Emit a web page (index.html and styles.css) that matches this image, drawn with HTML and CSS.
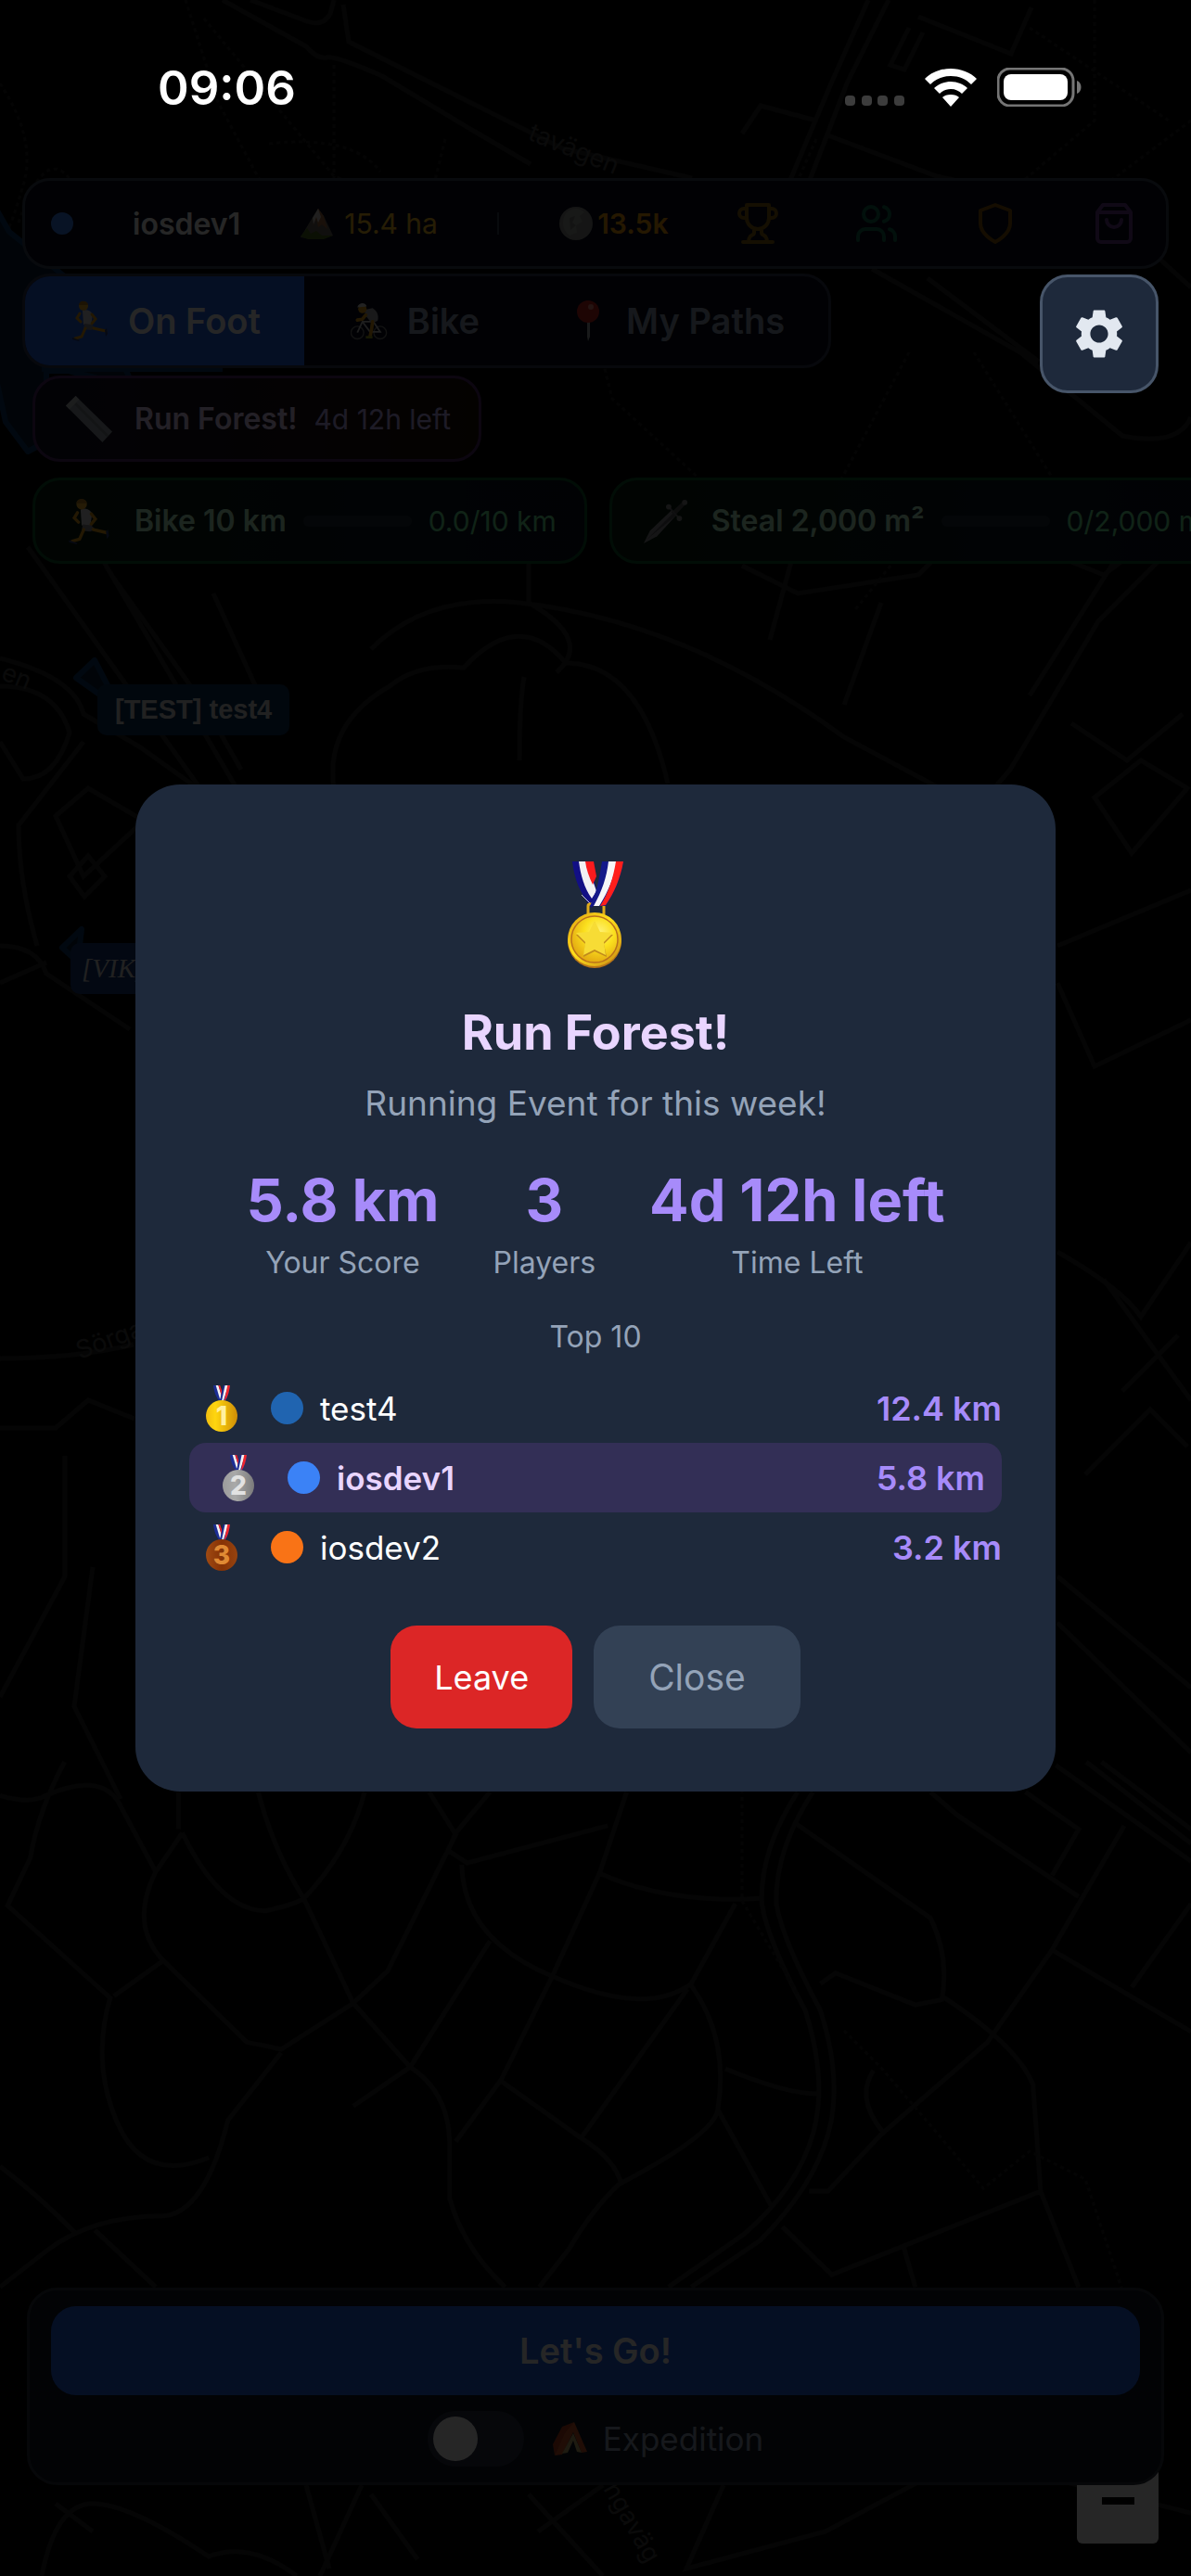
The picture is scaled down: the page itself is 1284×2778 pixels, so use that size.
FILE: index.html
```html
<!DOCTYPE html>
<html lang="en">
<head>
    <meta charset="UTF-8">
    <meta name="viewport" content="width=device-width, initial-scale=1.0">
    <title>Run Forest!</title>
    <link rel="stylesheet" href="styles.css">
</head>
<body>
    <!-- shared icons -->
    <svg class="sprite" aria-hidden="true">
        <defs>
            <linearGradient id="gold" x1="0" y1="0" x2="1" y2="1">
                <stop offset="0" stop-color="#e0a010"/>
                <stop offset="0.45" stop-color="#ffe01c"/>
                <stop offset="1" stop-color="#c98a12"/>
            </linearGradient>
            <radialGradient id="goldFace" cx="0.6" cy="0.35" r="0.8">
                <stop offset="0" stop-color="#fff27a"/>
                <stop offset="0.4" stop-color="#fbe01e"/>
                <stop offset="1" stop-color="#d9930c"/>
            </radialGradient>
            <linearGradient id="coin1" x1="0" y1="0" x2="1" y2="0">
                <stop offset="0" stop-color="#f0bc10"/>
                <stop offset="0.3" stop-color="#ffd60f"/>
                <stop offset="1" stop-color="#cf8d06"/>
            </linearGradient>
            <linearGradient id="coin2" x1="0" y1="0" x2="1" y2="0">
                <stop offset="0" stop-color="#9c9c9c"/>
                <stop offset="0.4" stop-color="#a9a9a9"/>
                <stop offset="1" stop-color="#7b7b7b"/>
            </linearGradient>
            <linearGradient id="coin3" x1="0" y1="0" x2="1" y2="0">
                <stop offset="0" stop-color="#a04a12"/>
                <stop offset="0.5" stop-color="#863205"/>
                <stop offset="1" stop-color="#96430f"/>
            </linearGradient>
        </defs>
        <symbol id="runner" viewBox="0 0 40 44">
            <path d="M9 14l-3 5 4 4" fill="none" stroke="#e8a21a" stroke-width="3" stroke-linecap="round"/>
            <path d="M12 11c4-2 9 0 11 4l-2 12-8-1z" fill="#d8d8dc"/>
            <path d="M22 15l4 5-4 5" fill="none" stroke="#e8a21a" stroke-width="3" stroke-linecap="round"/>
            <path d="M14 25l8 1 4 4-5 2-8-1z" fill="#8d8a96"/>
            <path d="M24 30l13 3M15 30l-4 9-7 2" fill="none" stroke="#e8a21a" stroke-width="3" stroke-linecap="round"/>
            <path d="M36 32l2-2 1 6-2 3zM1 40l8 3-1 1-7-2z" fill="#2b3c78"/>
            <circle cx="13" cy="6" r="5" fill="#f3b32c"/>
            <path d="M8 5c0-5 9-6 10 0z" fill="#b9801c"/>
        </symbol>
        <symbol id="cyclist" viewBox="0 0 44 44">
            <g fill="none" stroke="#777" stroke-width="1.5">
                <circle cx="8" cy="36" r="7.5"/>
                <circle cx="35" cy="36" r="7.5"/>
            </g>
            <path d="M8 36l6-13 9 12h12l-8-12H14" fill="none" stroke="#c9c9c9" stroke-width="2"/>
            <path d="M16 9l10-2c5 3 8 9 6 15l-7 3-7-9z" fill="#a9a9b0"/>
            <path d="M18 15l-4 5-6 1M26 23l-1 8-2 10" fill="none" stroke="#e8a21a" stroke-width="4" stroke-linecap="round"/>
            <circle cx="14" cy="8" r="5" fill="#e8a21a"/>
            <path d="M8 6c1-6 10-7 11-1z" fill="#e4e4e4"/>
            <path d="M18 40h8v3h-8z" fill="#9fa61e"/>
        </symbol>
        <symbol id="pin" viewBox="0 0 40 44">
            <path d="M19 20h3v19l-2 5-1-5z" fill="#a9adb3"/>
            <circle cx="20" cy="12" r="12" fill="#c9211e"/>
            <circle cx="23" cy="7" r="3" fill="#f08a80"/>
        </symbol>
        <symbol id="mountain" viewBox="0 0 37 34">
            <path d="M1 32L13 12l7-11 6 8 10 21-10 3H9z" fill="#6f665c"/>
            <path d="M20 1l6 8 4 14-6-5-4 3-2-9-4 8z" fill="#a86c45"/>
            <path d="M20 1l3 9-3 6-2-6-3 8-1-7z" fill="#d8d2cc"/>
            <path d="M1 31l7-9 4 6 6-3 6 5 12 0-10 4H9z" fill="#4c6b1e"/>
        </symbol>
        <symbol id="rock" viewBox="0 0 38 38">
            <circle cx="19" cy="19" r="18" fill="#8b8f8a"/>
            <path d="M8 8c6-6 15-6 20-1l-5 4 3 6-7 4 1 8-8 3C4 26 3 16 8 8z" fill="#a2a59f"/>
            <path d="M12 13l6-2-3 7 4 3-6 5z" fill="#7f837e"/>
        </symbol>
        <symbol id="ruler" viewBox="0 0 52 52">
            <path d="M0 11L11 0l41 40-11 12z" fill="#9aa3ab"/>
            <path d="M7 5l40 40" stroke="#7d868e" stroke-width="3"/>
            <path d="M0 11L11 0l4 4L4 15z" fill="#b8bfc4"/>
        </symbol>
        <symbol id="dagger" viewBox="0 0 52 52">
            <path d="M1 51L8 37 32 14l5 6-21 23z" fill="#909094"/>
            <path d="M4 47l30-30 3 3z" fill="#5b5b60"/>
            <path d="M32 16L45 4l3 3-12 13z" fill="#56565a"/>
            <path d="M29 10l12 13" stroke="#6f6f73" stroke-width="2"/>
            <circle cx="47" cy="5" r="3" fill="#8a8a8e"/>
            <circle cx="29" cy="10" r="3" fill="#8a8a8e"/>
            <circle cx="41" cy="23" r="3" fill="#8a8a8e"/>
        </symbol>
        <symbol id="tent" viewBox="0 0 39 36">
            <path d="M1 24L11 5 24 0l-12 18-9 18z" fill="#b8401c"/>
            <path d="M24 0l14 32-6 1-9-22L11 35l-8 1 11-24z" fill="#d8582a"/>
            <path d="M23 12l9 21-5-1-4-12-6 13-6 1z" fill="#c9b476"/>
        </symbol>
        <symbol id="ribbon" viewBox="0 0 20 20">
            <path d="M0 0h7l4 17-3 3C3 14 1 8 0 0z" fill="#1b2d94"/>
            <path d="M3 0h3l4 13-2 4z" fill="#f2f2f2"/>
            <path d="M6 0h2l3 9-1 4z" fill="#e8222c"/>
            <path d="M12 0h8c-1 8-3 15-6 19l-5 1-1-3z" fill="#1b2d94"/>
            <path d="M14 0h4l-6 19-2 0z" fill="#f2f2f2"/>
            <path d="M17 0h3c-1 8-3 14-6 18l-1 1z" fill="#f0262c"/>
        </symbol>
    </svg>

    <div class="app">
        <!-- map layer -->
        <div class="map">
            <svg class="map-tiles" viewBox="0 0 1284 2778" preserveAspectRatio="xMidYMin slice" aria-hidden="true">
                <g class="roads">
                    <path d="M240 0l90 50q12 14 22 12t60 20l100 60 60 35M360 0l-4 15q-8 14-25 8L270 0M370 5l6 40 130 65 100 50 140 32"/>
                    <path d="M936 0l-40 90-55 130M958 0l-45 90-50 130M990 18l100 40 22-50M890 145l120 45 90 20M880 130l-60-16-20 30M980 30l-20 40 15 5 20-40"/>
                    <path d="M940 290l160 90 110 90q60 12 74-20M1240 270l44 40M1000 300l120 90M30 590l200 280M85 560l170 290M120 620l100 140 40 70M230 640l50 110"/>
                    <path d="M570 600v50q70 40 30 75M360 850q-10-70 60-110 30-25 80-20 60-65 110-5 80 0 110 130M400 700q60-60 160-50 180 20 350 145l150 80M560 820q0-60 5-90"/>
                    <path d="M0 710q80 20 90 60l60 35 70 50M0 740q60 0 75 50-15 50-50 50L0 800M90 800L20 890q0 60 20 130M60 880l35-30 60 35-65 60zM75 945l20-22 18 22-22 22zM0 1020q40 0 50 30l90 60M0 1060l50-22"/>
                    <path d="M1284 570l-100 100-95 160-60 70M1230 560l-120 190M1140 1020l144-60M1140 1060l40 90 104-50M1140 1350q70 40 90 70l54-80M1190 1380l94 130M1140 1700l144 120M1140 1750l144 140"/>
                    <path d="M0 1465q80 0 144-15M0 1540h60l35-30 50 20M70 1570v130l-70 130M100 1690l-20 150 50 100M1050 560l-60 60-130 20-60-30M860 580l-30 110M950 650l-40 110"/>
                    <path d="M1140 600l50 20 40-30M1155 780l60 40 60-50M1180 860l50-40 50 30-60 70zM1210 1500l60-60M1170 1590l70-70 40 40"/>
                </g>
                <!-- lower streets -->
                <g class="roads" transform="translate(0 1900) scale(0.8189 0.3827)">
                    <path d="M85 0Q50 140 40 270L10 405 145 665Q120 850 155 1020T275 1115M0 95Q40 120 60 95 130 30 155 110L205 310Q170 460 215 560L150 660M235 85V190M240 200L205 310M240 200Q290 420 350 420 390 400 400 385 460 250 480 85M340 85Q360 250 400 385L465 680 370 810Q350 800 325 790L215 560M370 820L300 1010Q270 1270 215 1280 120 1280 60 1380L0 1480M0 1140Q50 1220 100 1330M125 1320L205 1480M565 85L600 205 510 590 465 680 540 860Q590 930 592 1070V1230Q610 1370 665 1480M645 85L600 200 590 250 615 285 800 180M608 290Q610 500 728 605 850 720 910 625L968 400M825 85L790 310 728 600 660 895 600 1070M645 505L540 860 465 970M790 315Q880 400 1000 385M910 630Q960 780 945 980 940 1050 815 1190 780 1260 750 1370L710 1480M905 640L765 1060Q810 1120 818 1190M660 900L765 1060M945 980L1015 1250M955 865Q1040 940 1080 935M1045 170L1225 440Q1250 550 1240 670L1205 685 1100 595 1080 625M1240 660Q1340 800 1360 910L1370 1210 1420 1480M1370 1210L1095 1445 1030 1310M1190 1370L1205 1480M1350 85L1420 190 1385 320M1225 85L1260 150 1420 380M1480 180L1385 530 1300 790 1160 1050 1090 1210 1065 1210M1385 530L1568 760M1568 400L1490 635M1150 870Q1125 950 1165 1050"/>
                    <path d="M1050 85Q1000 250 1003 400 1010 500 1060 700 1090 900 1070 1050 1050 1200 980 1330L880 1480M1070 85Q1020 250 1022 400 1030 500 1080 700 1110 900 1090 1050 1070 1200 1000 1350L910 1480M1390 10L1568 280M1430 0L1568 230M1450 0L1568 190"/>
                </g>
                <g class="roads">
                    <path d="M45 2778Q60 2700 100 2700T225 2757Q270 2740 320 2778M390 2680l-45 98M400 2690l50 70M330 2680l25 90M780 2680l-40 90 150-40 150-80 244 60M650 2680l-70 50M570 2690l80 88M60 2700l40 30"/>
                </g>
                <g class="paths">
                    <path d="M200 0l35 110 80 150M220 20l140 170 160 60M360 70v170M0 90q40 60 25 110t-22 60M20 240q30-90 60-40M480 150l-20 80M290 155q90-10 120 30M880 150l-40 90M1110 30l150 100M1180 0v130l-130 110M1284 130l-120 90M650 390l10 40 120 110M980 380l-80 150M1050 380l100 160M800 560l80-20 60 40M1000 560l-80 100"/>
                    <path d="M910 2190l40 40 60 70 50 60 50-40 60 30 60 180M800 1930v120l60 100"/>
                </g>
                <!-- claimed areas -->
                <path class="zone" d="M-6 222l16 28 62 50 60 90 12 28-70-18H50v76l-20 11L6 455-6 400z"/>
                <path class="zone-line" d="M45 398h195"/>
                <path class="zone" d="M82 731l20-19 16 31-12 5z"/>
                <path class="zone" d="M67 1022l21-20-4 34-6-4z"/>
                <g class="street-names">
                    <text transform="translate(568 150) rotate(22)">tavägen</text>
                    <text transform="translate(0 732) rotate(22)">en</text>
                    <text transform="translate(86 1466) rotate(-20)">Sörga</text>
                    <text transform="translate(650 2684) rotate(60)">ngaväg</text>
                </g>
            </svg>
            <span class="tag tag-test">[TEST] test4</span>
            <span class="tag tag-vik">[VIK] iosdev1</span>
            <button class="zoom-out" type="button" aria-label="Zoom out"></button>
        </div>

        <header class="hud">
            <div class="topbar">
                <span class="dot dot-me"></span>
                <span class="username">iosdev1</span>
                <span class="land"><svg class="icon-land"><use href="#mountain"/></svg>15.4 ha</span>
                <span class="divider"></span>
                <span class="gold"><svg class="icon-rock"><use href="#rock"/></svg>13.5k</span>
                <button class="icon-btn trophy" type="button" aria-label="Leaderboard">
                    <svg viewBox="0 0 24 24"><path d="M6 9H4.500a2.500 2.500 0 0 1 0-5H6M18 9h1.500a2.500 2.500 0 0 0 0-5H18M4 22h16M10 14.660V17c0 .55-.47.98-.97 1.210C7.850 18.750 7 20.240 7 22M14 14.660V17c0 .55.47.98.97 1.210C16.150 18.750 17 20.240 17 22M18 2H6v7a6 6 0 0 0 12 0V2Z"/></svg>
                </button>
                <button class="icon-btn users" type="button" aria-label="Friends">
                    <svg viewBox="0 0 24 24"><path d="M16 21v-2a4 4 0 0 0-4-4H6a4 4 0 0 0-4 4v2"/><circle cx="9" cy="7" r="4"/><path d="M22 21v-2a4 4 0 0 0-3-3.870M16 3.130a4 4 0 0 1 0 7.750"/></svg>
                </button>
                <button class="icon-btn shield" type="button" aria-label="Defence">
                    <svg viewBox="0 0 24 24"><path d="M12 22s8-4 8-10V5l-8-3-8 3v7c0 6 8 10 8 10z"/></svg>
                </button>
                <button class="icon-btn bag" type="button" aria-label="Shop">
                    <svg viewBox="0 0 24 24"><path d="M6 2L3 6v14a2 2 0 0 0 2 2h14a2 2 0 0 0 2-2V6l-3-4zM3 6h18M16 10a4 4 0 0 1-8 0"/></svg>
                </button>
            </div>

            <nav class="tabs">
                <button class="tab active" type="button"><svg><use href="#runner"/></svg>On Foot</button>
                <button class="tab" type="button"><svg><use href="#cyclist"/></svg>Bike</button>
                <button class="tab" type="button"><svg><use href="#pin"/></svg>My Paths</button>
            </nav>

            <div class="pill event">
                <svg><use href="#ruler"/></svg>
                <strong>Run Forest!</strong>
                <span>4d 12h left</span>
            </div>

            <div class="goals">
                <div class="pill goal">
                    <svg><use href="#runner"/></svg>
                    <strong>Bike 10 km</strong>
                    <span class="bar"></span>
                    <span>0.0/10 km</span>
                </div>
                <div class="pill goal">
                    <svg><use href="#dagger"/></svg>
                    <strong>Steal 2,000 m²</strong>
                    <span class="bar"></span>
                    <span>0/2,000 m²</span>
                </div>
            </div>
        </header>

        <section class="panel">
            <button class="go" type="button">Let's Go!</button>
            <label class="expedition">
                <input type="checkbox" class="switch">
                <span><svg><use href="#tent"/></svg>Expedition</span>
            </label>
        </section>
    </div>

    <div class="backdrop">
        <section class="dialog" role="dialog" aria-labelledby="event-title">
            <svg class="medal" viewBox="0 0 62 116" aria-hidden="true">
                <path d="M6 1h19l9 40-7 10C15 37 8 20 6 1z" fill="#120f84"/>
                <path d="M13 1h8l11 32-5 8C19 30 15 16 13 1z" fill="#f1f1f4"/>
                <path d="M20 1h9l3 16-4 9C24 18 21 9 20 1z" fill="#fb1b1d"/>
                <path d="M16 37l10 10" stroke="#c9c9da" stroke-width="1"/>
                <rect x="23" y="47" width="17" height="12" rx="2" fill="none" stroke="#e0ab1a" stroke-width="3"/>
                <path d="M38 1h23c-3 19-10 34-19 48H25c8-15 10-31 13-48z" fill="#14198a"/>
                <path d="M45 1h9c-3 17-9 32-19 48h-6c9-16 14-31 16-48z" fill="#f6f6f8"/>
                <path d="M53 1h8c-3 18-10 34-19 47l-6 1c9-14 14-30 17-48z" fill="#ff1f1b"/>
                <circle cx="30" cy="87" r="29" fill="#b87418"/>
                <circle cx="30" cy="85" r="29" fill="url(#gold)"/>
                <circle cx="30" cy="85" r="25" fill="url(#goldFace)" stroke="#b9701c" stroke-width="1.500"/>
                <path d="M30 66l6 13 14 1-10 10 3 14-13-6-12 6 2-14-10-10 14-1z" fill="#c08a1c"/>
                <path d="M30 65l6 12 14 1-10 10 2 14-12-6-12 6 2-14-10-10 14-1z" fill="#f7dc35"/>
            </svg>
            <h1 id="event-title">Run Forest!</h1>
            <p class="subtitle">Running Event for this week!</p>

            <dl class="stats">
                <div><dd>5.8 km</dd><dt>Your Score</dt></div>
                <div><dd>3</dd><dt>Players</dt></div>
                <div><dd>4d 12h left</dd><dt>Time Left</dt></div>
            </dl>

            <h2>Top 10</h2>
            <ol class="ranking">
                <li>
                    <svg class="rank" viewBox="0 0 34 50"><use href="#ribbon" x="8" width="18" height="18"/><circle cx="17" cy="33" r="17" fill="url(#coin1)"/><text class="digit digit-1" x="17" y="43">1</text></svg>
                    <span class="dot dot-test"></span>
                    <span class="player">test4</span>
                    <span class="score">12.4 km</span>
                </li>
                <li class="me">
                    <svg class="rank" viewBox="0 0 34 50"><use href="#ribbon" x="8" width="18" height="18"/><circle cx="17" cy="33" r="17" fill="url(#coin2)"/><text class="digit digit-2" x="17" y="43">2</text></svg>
                    <span class="dot dot-dev1"></span>
                    <span class="player">iosdev1</span>
                    <span class="score">5.8 km</span>
                </li>
                <li>
                    <svg class="rank" viewBox="0 0 34 50"><use href="#ribbon" x="8" width="18" height="18"/><circle cx="17" cy="33" r="17" fill="url(#coin3)"/><text class="digit digit-3" x="17" y="43">3</text></svg>
                    <span class="dot dot-dev2"></span>
                    <span class="player">iosdev2</span>
                    <span class="score">3.2 km</span>
                </li>
            </ol>

            <div class="actions">
                <button class="leave" type="button">Leave</button>
                <button class="close" type="button">Close</button>
            </div>
        </section>
    </div>

    <button class="settings" type="button" aria-label="Settings">
        <svg viewBox="0 0 24 24"><path d="M19.140 12.940c.04-.3.06-.61.06-.94 0-.32-.02-.64-.07-.94l2.030-1.580c.18-.14.23-.41.12-.61l-1.920-3.320c-.12-.22-.37-.29-.59-.22l-2.390.96c-.5-.38-1.030-.7-1.620-.94l-.36-2.540c-.04-.24-.24-.41-.48-.41h-3.840c-.24 0-.43.17-.47.41l-.36 2.540c-.59.24-1.130.57-1.620.94l-2.390-.96c-.22-.08-.47 0-.59.22L2.740 8.870c-.12.21-.08.47.12.61l2.030 1.580c-.05.3-.09.63-.09.94s.02.64.07.94l-2.030 1.580c-.18.14-.23.41-.12.61l1.920 3.320c.12.22.37.29.59.22l2.390-.96c.5.38 1.030.7 1.620.94l.36 2.540c.05.24.24.41.48.41h3.840c.24 0 .44-.17.47-.41l.36-2.540c.59-.24 1.130-.56 1.620-.94l2.390.96c.22.08.47 0 .59-.22l1.920-3.320c.12-.22.07-.47-.12-.61l-2.010-1.580zM12 15.600c-1.980 0-3.600-1.620-3.600-3.600s1.620-3.600 3.600-3.600 3.600 1.620 3.600 3.600-1.620 3.600-3.600 3.600z"/></svg>
    </button>

    <div class="statusbar">
        <time>09:06</time>
        <div class="status-icons">
            <svg width="64" height="42" viewBox="0 0 64 42"><g fill="#3c3c3c"><rect y="30" width="11" height="11" rx="4"/><rect x="18" y="30" width="11" height="11" rx="4"/><rect x="35" y="30" width="11" height="11" rx="4"/><rect x="53" y="30" width="11" height="11" rx="4"/></g></svg>
            <svg width="56" height="42" viewBox="0 0 56 42"><g fill="#fff"><path d="M28 1c11 0 21 4 28 11l-6 6c-6-6-13-9-22-9S12 12 6 18l-6-6C7 5 17 1 28 1z"/><path d="M28 15c7 0 14 3 18 7l-6 6c-3-3-7-5-12-5s-9 2-12 5l-6-6c4-4 11-7 18-7z"/><path d="M28 29c4 0 7 1 9 3l-9 10-9-10c2-2 5-3 9-3z"/></g></svg>
            <svg width="91" height="42" viewBox="0 0 91 42"><rect x="1" y="1" width="81" height="40" rx="13" fill="none" stroke="#757575" stroke-width="3"/><rect x="7" y="7" width="69" height="28" rx="8" fill="#fff"/><path d="M86 14c6 2 6 12 0 14z" fill="#757575"/></svg>
        </div>
    </div>
</body>
</html>
```
FILE: styles.css
```css
* {
    box-sizing: border-box;
}

body {
    margin: 0;
    background: #060606;
    color: #fff;
    font-family: Inter, "Noto Sans", sans-serif;
    font-size: 32px;
}

button {
    border: none;
    background: none;
    color: inherit;
    font-family: inherit;
    padding: 0;
    cursor: pointer;
}

.sprite {
    position: absolute;
    width: 0;
    height: 0;
}

.app {
    position: relative;
    display: flex;
    flex-direction: column;
    justify-content: space-between;
    min-height: 100vh;
    padding: 192px 24px 98px;
    overflow: hidden;
}

/* map */
.map {
    position: absolute;
    inset: 0;
}

.map-tiles {
    width: 100%;
    height: 100%;
}

.roads path {
    fill: none;
    stroke: #222;
    stroke-width: 5;
    vector-effect: non-scaling-stroke;
}

.paths path {
    fill: none;
    stroke: #1c1c1c;
    stroke-width: 3;
    stroke-dasharray: 4 4;
}

.zone {
    fill: #07203a;
    stroke: #0c3a6c;
    stroke-width: 6;
    stroke-linejoin: round;
}

.zone-line {
    stroke: #0c3a6c;
    stroke-width: 6;
}

.street-names {
    fill: #444;
    font-size: 27px;
}

.tag {
    position: absolute;
    border-radius: 10px;
    padding: 0 19px;
    color: #ddd;
    font-family: "Liberation Sans", Arial, sans-serif;
    font-size: 29px;
    font-weight: bold;
    line-height: 55px;
}

.tag-test {
    left: 105px;
    top: 738px;
    background: #0b3057;
}

.tag-vik {
    left: 76px;
    top: 1017px;
    padding: 0 12px;
    background: #16397a;
    font-family: "Liberation Serif", serif;
    font-style: italic;
    font-weight: normal;
}

.zoom-out {
    position: absolute;
    right: 35px;
    bottom: 35px;
    width: 88px;
    height: 93px;
    border-radius: 6px;
    background: #fff;
}

.zoom-out::before {
    content: "";
    display: block;
    width: 35px;
    height: 8px;
    margin: 0 auto;
    background: #000;
}

/* header */
.hud {
    position: relative;
    display: flex;
    flex-direction: column;
    align-items: flex-start;
}

.topbar {
    display: flex;
    align-items: center;
    justify-content: space-between;
    width: 100%;
    height: 98px;
    padding: 0 24px 0 28px;
    border: 3px solid #3b4258;
    border-radius: 30px;
    background: #070b1c;
}

.dot {
    flex: none;
    width: 35px;
    height: 35px;
    border-radius: 50%;
}

.dot-me {
    width: 24px;
    height: 24px;
    background: #3b82f6;
}

.username {
    font-weight: 600;
}

.land,
.gold {
    display: flex;
    align-items: center;
    font-size: 30px;
    color: #fbbf24;
}

.gold {
    color: #f59e0b;
    font-weight: 600;
    gap: 4px;
}

.land {
    gap: 11px;
}

.icon-land {
    width: 37px;
    height: 34px;
}

.icon-rock {
    width: 38px;
    height: 38px;
}

.divider {
    width: 2px;
    height: 24px;
    background: #3b4458;
}

.icon-btn {
    padding: 0 8px;
    height: 48px;
}

.icon-btn svg {
    width: 48px;
    height: 48px;
    fill: none;
    stroke: currentColor;
    stroke-width: 2;
    stroke-linecap: round;
    stroke-linejoin: round;
}

.trophy {
    color: #8a6410;
}

.users {
    color: #0e6e50;
}

.shield {
    color: #8a5a0a;
}

.bag {
    color: #6c3f96;
}

.tabs {
    display: flex;
    height: 102px;
    margin-top: 5px;
    border: 3px solid #303850;
    border-radius: 30px;
    background: #070b1c;
    overflow: hidden;
}

.tab {
    display: flex;
    align-items: center;
    gap: 21px;
    padding: 0 47px 0 50px;
    color: #94a3b8;
    font-size: 38px;
    font-weight: 600;
}

.tab svg {
    width: 40px;
    height: 44px;
}

.tab.active {
    background: #2563eb;
    color: #fff;
}

.pill {
    display: flex;
    flex: none;
    align-items: center;
    gap: 18px;
    height: 93px;
    padding: 0 30px 0 32px;
    border: 3px solid #55286f;
    border-radius: 30px;
    white-space: nowrap;
}

.pill svg {
    width: 52px;
    height: 50px;
    margin-right: 5px;
}

.pill strong {
    font-weight: 600;
}

.pill span {
    font-size: 30px;
}

.event {
    margin: 8px 0 0 11px;
    background: linear-gradient(90deg, #111027, #1c0f16 60%, #1d1205);
    color: #e9d5ff;
}

.event span {
    color: #c4b5fd;
}

.goals {
    display: flex;
    gap: 24px;
    margin: 17px 0 0 11px;
}

.goal {
    border-color: #0b5a2c;
    background: linear-gradient(90deg, #07200f, #0b1822 60%, #0a0f20);
    color: #bbf7d0;
}

.goal span {
    color: #6ee79a;
}

.goal .bar {
    width: 117px;
    height: 12px;
    border-radius: 6px;
    background: #1f2c36;
}

/* bottom panel */
.panel {
    position: relative;
    margin: 0 5px;
    padding: 17px 23px 17px;
    border: 3px solid #2a323e;
    border-radius: 33px;
    background: #0f1923;
}

.go {
    display: block;
    width: 100%;
    height: 96px;
    border-radius: 27px;
    background: #2563eb;
    font-size: 38px;
    font-weight: 600;
}

.expedition {
    display: flex;
    align-items: center;
    justify-content: center;
    gap: 30px;
    margin-top: 17px;
    color: #94a3b8;
    font-size: 35px;
}

.expedition span {
    display: flex;
    align-items: center;
    gap: 16px;
}

.expedition svg {
    width: 39px;
    height: 36px;
}

.switch {
    appearance: none;
    width: 104px;
    height: 60px;
    margin: 0;
    padding: 6px;
    border-radius: 30px;
    background: #2a3146;
}

.switch::before {
    content: "";
    display: block;
    width: 48px;
    height: 48px;
    border-radius: 50%;
    background: #fff;
}

.switch:checked {
    background: #2563eb;
}

/* event dialog */
.backdrop {
    position: absolute;
    inset: 0;
    display: flex;
    align-items: center;
    justify-content: center;
    background: rgba(0, 0, 0, 0.85);
}

.dialog {
    width: calc(100% - 292px);
    padding: 82px 58px 68px;
    border-radius: 48px;
    background: #1e293b;
    text-align: center;
}

.medal {
    display: block;
    width: 62px;
    height: 116px;
    margin: 0 auto 40px;
}

h1 {
    margin: 0;
    color: #e9d5ff;
    font-size: 52px;
    font-weight: 700;
    line-height: 60px;
}

.subtitle {
    margin: 22px 0 0;
    color: #94a3b8;
    font-size: 37px;
    line-height: 48px;
}

.stats {
    display: flex;
    justify-content: center;
    gap: 58px;
    margin: 42px 0 36px;
}

.stats dd {
    margin: 0;
    color: #a78bfa;
    font-size: 63px;
    font-weight: 700;
    line-height: 76px;
}

.stats dt {
    margin-top: 8px;
    color: #94a3b8;
    line-height: 44px;
}

h2 {
    margin: 0 0 17px;
    color: #94a3b8;
    font-size: 32px;
    font-weight: 400;
    line-height: 44px;
}

.ranking {
    margin: 0;
    padding: 0;
    list-style: none;
    text-align: left;
}

.ranking li {
    display: flex;
    align-items: center;
    gap: 18px;
    height: 75px;
    padding-left: 18px;
    font-size: 35px;
}

.ranking .me {
    padding: 0 18px 0 36px;
    border-radius: 18px;
    background: #332f56;
}

.me .player {
    color: #e9d5ff;
    font-weight: 600;
}

.rank {
    width: 34px;
    height: 50px;
    margin-right: 18px;
}

.digit {
    font-size: 28px;
    font-weight: 800;
    text-anchor: middle;
}

.digit-1 {
    fill: #fff0a0;
}

.digit-2 {
    fill: #e2e2e2;
}

.digit-3 {
    fill: #e08a34;
}

.dot-test {
    background: #2064b0;
}

.dot-dev1 {
    background: #3b82f6;
}

.dot-dev2 {
    background: #f97316;
}

.score {
    margin-left: auto;
    color: #a78bfa;
    font-size: 36px;
    font-weight: 600;
}

.actions {
    display: flex;
    justify-content: center;
    gap: 23px;
    margin-top: 47px;
}

.actions button {
    height: 111px;
    border-radius: 28px;
}

.leave {
    padding: 0 47px;
    background: #dc2626;
    font-size: 36px;
}

.close {
    padding: 0 59px;
    background: #334155;
    color: #94a3b8;
    font-size: 39px;
}

.settings {
    position: absolute;
    top: 296px;
    right: 35px;
    display: flex;
    align-items: center;
    justify-content: center;
    width: 128px;
    height: 128px;
    border: 3px solid #475569;
    border-radius: 30px;
    background: #1e293b;
}

.settings svg {
    width: 64px;
    height: 64px;
    fill: #e2e8f0;
}

/* phone status bar */
.statusbar {
    position: absolute;
    top: 0;
    left: 0;
    display: flex;
    align-items: center;
    justify-content: space-between;
    width: 100%;
    padding: 64px 118px 0 170px;
}

.statusbar time {
    font-size: 51px;
    font-weight: 600;
    line-height: 62px;
}

.status-icons {
    display: flex;
    gap: 22px;
    margin-top: -3px;
}
```
